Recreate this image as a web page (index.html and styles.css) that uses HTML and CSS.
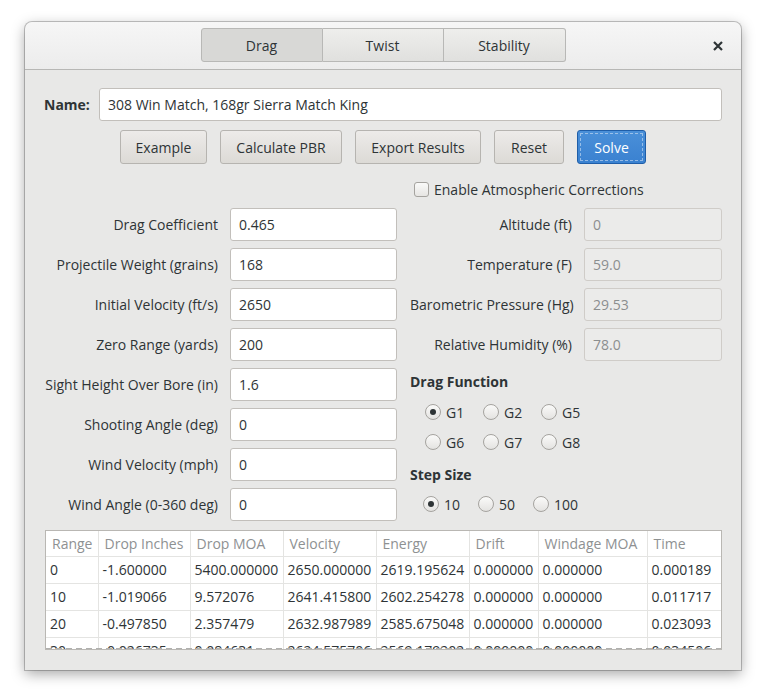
FILE: index.html
```html
<!DOCTYPE html>
<html>
<head>
<meta charset="utf-8">
<link rel="stylesheet" href="styles.css">
</head>
<body>
<div class="window">
  <header class="headerbar">
    <div class="switcher">
      <div class="sw-btn active">Drag</div>
      <div class="sw-btn">Twist</div>
      <div class="sw-btn">Stability</div>
    </div>
    <div class="close">
      <svg width="10" height="10" viewBox="0 0 10 10"><path d="M1 1L9 9M9 1L1 9" stroke="#2e3436" stroke-width="2.2" fill="none"/></svg>
    </div>
  </header>
  <main class="content">
    <div class="name-row">
      <span class="name-label">Name:</span>
      <div class="entry name-entry">308 Win Match, 168gr Sierra Match King</div>
    </div>
    <div class="button-row">
      <div class="btn b-example">Example</div>
      <div class="btn b-pbr">Calculate PBR</div>
      <div class="btn b-export">Export Results</div>
      <div class="btn b-reset">Reset</div>
      <div class="btn b-solve suggested">Solve</div>
    </div>
    <div class="columns">
      <div class="left-col">
        <div class="form-grid left-grid">
          <label>Drag Coefficient</label><div class="entry">0.465</div>
          <label>Projectile Weight (grains)</label><div class="entry">168</div>
          <label>Initial Velocity (ft/s)</label><div class="entry">2650</div>
          <label>Zero Range (yards)</label><div class="entry">200</div>
          <label>Sight Height Over Bore (in)</label><div class="entry">1.6</div>
          <label>Shooting Angle (deg)</label><div class="entry">0</div>
          <label>Wind Velocity (mph)</label><div class="entry">0</div>
          <label>Wind Angle (0-360 deg)</label><div class="entry">0</div>
        </div>
      </div>
      <div class="right-col">
        <div class="check-row"><span class="checkbox"></span><span>Enable Atmospheric Corrections</span></div>
        <div class="form-grid right-grid">
          <label>Altitude (ft)</label><div class="entry disabled">0</div>
          <label>Temperature (F)</label><div class="entry disabled">59.0</div>
          <label>Barometric Pressure (Hg)</label><div class="entry disabled">29.53</div>
          <label>Relative Humidity (%)</label><div class="entry disabled">78.0</div>
        </div>
        <div class="section-title drag-title">Drag Function</div>
        <div class="radio-grid">
          <div class="radio-item"><span class="radio checked"></span>G1</div>
          <div class="radio-item"><span class="radio"></span>G2</div>
          <div class="radio-item"><span class="radio"></span>G5</div>
          <div class="radio-item"><span class="radio"></span>G6</div>
          <div class="radio-item"><span class="radio"></span>G7</div>
          <div class="radio-item"><span class="radio"></span>G8</div>
        </div>
        <div class="section-title step-title">Step Size</div>
        <div class="radio-row">
          <div class="radio-item"><span class="radio checked"></span>10</div>
          <div class="radio-item"><span class="radio"></span>50</div>
          <div class="radio-item"><span class="radio"></span>100</div>
        </div>
      </div>
    </div>
    <div class="table-wrap">
      <table class="results">
        <colgroup>
          <col class="c1"><col class="c2"><col class="c3"><col class="c4"><col class="c5"><col class="c6"><col class="c7"><col class="c8">
        </colgroup>
        <thead>
          <tr><th>Range</th><th>Drop Inches</th><th>Drop MOA</th><th>Velocity</th><th>Energy</th><th>Drift</th><th>Windage MOA</th><th>Time</th></tr>
        </thead>
        <tbody>
          <tr><td>0</td><td>-1.600000</td><td>5400.000000</td><td>2650.000000</td><td>2619.195624</td><td>0.000000</td><td>0.000000</td><td>0.000189</td></tr>
          <tr><td>10</td><td>-1.019066</td><td>9.572076</td><td>2641.415800</td><td>2602.254278</td><td>0.000000</td><td>0.000000</td><td>0.011717</td></tr>
          <tr><td>20</td><td>-0.497850</td><td>2.357479</td><td>2632.987989</td><td>2585.675048</td><td>0.000000</td><td>0.000000</td><td>0.023093</td></tr>
          <tr><td>30</td><td>-0.026735</td><td>0.084631</td><td>2624.575706</td><td>2569.179202</td><td>0.000000</td><td>0.000000</td><td>0.034506</td></tr>
        </tbody>
      </table>
      <div class="undershoot"></div>
    </div>
  </main>
</div>
</body>
</html>
```
FILE: styles.css
```css
* { box-sizing: border-box; }
html, body { margin: 0; padding: 0; }
body {
  background: #ffffff;
  font-family: "Open Sans", "Noto Sans", sans-serif;
  font-size: 14px;
  color: #2e3436;
  width: 766px;
  height: 699px;
  overflow: hidden;
}
.window {
  margin: 22px 0 0 25px;
  width: 716px;
  height: 648px;
  border-radius: 7px 7px 0 0;
  background: #e8e8e7;
  box-shadow: 0 0 0 1px rgba(0,0,0,0.22), 0 4px 14px rgba(0,0,0,0.35);
  display: flex;
  flex-direction: column;
  overflow: hidden;
}
.headerbar {
  height: 48px;
  flex: none;
  background: linear-gradient(#f6f6f6, #ececec);
  border-bottom: 1px solid #b7b7b5;
  border-radius: 7px 7px 0 0;
  display: flex;
  align-items: center;
  justify-content: center;
  position: relative;
}
.switcher {
  display: flex;
  margin-top: -1px;
}
.sw-btn {
  width: 121px;
  height: 34px;
  display: flex;
  align-items: center;
  justify-content: center;
  border: 1px solid #b8b8b6;
  border-left-width: 0;
  background: linear-gradient(#eeeeec, #e0e0de);
}
.sw-btn:first-child { border-left-width: 1px; border-radius: 3px 0 0 3px; width: 122px; }
.sw-btn:last-child { border-radius: 0 3px 3px 0; width: 122px; }
.sw-btn.active { background: #d8d8d6; }
.close {
  position: absolute;
  right: 18px;
  top: 19px;
  width: 10px;
  height: 10px;
  display: flex;
}
.content {
  padding: 18px 19px 0 19px;
  flex: 1;
}
.name-row {
  display: flex;
  align-items: center;
  gap: 12px;
}
.name-label { font-weight: bold; width: 43px; }
.entry {
  height: 33px;
  background: #ffffff;
  border: 1px solid #c2bfbb;
  border-radius: 3px;
  padding-left: 8px;
  display: flex;
  align-items: center;
  color: #2e3436;
}
.name-entry { flex: 1; }
.entry.disabled { background: #ebebea; color: #8b8e8f; border-color: #cfccc8; }
.button-row {
  display: flex;
  justify-content: center;
  gap: 13px;
  margin-top: 9px;
}
.btn {
  height: 34px;
  display: flex;
  align-items: center;
  justify-content: center;
  border: 1px solid #b6b4b0;
  border-radius: 3px;
  background: linear-gradient(#edebe9, #dcdad6);
}
.b-example { width: 87px; }
.b-pbr { width: 122px; }
.b-export { width: 126px; }
.b-reset { width: 70px; }
.b-solve { width: 69px; }
.btn.suggested {
  background: linear-gradient(#4a90d9, #3a81d0);
  border-color: #1f5ea8;
  color: #ffffff;
  outline: 1px dashed rgba(255,255,255,0.45);
  outline-offset: -4px;
}
.columns {
  display: flex;
  gap: 13px;
  margin-top: 15px;
}
.left-col { padding-top: 29px; }
.form-grid {
  display: grid;
  row-gap: 7px;
  column-gap: 12px;
  align-items: center;
}
.form-grid label { text-align: right; white-space: nowrap; }
.left-grid { grid-template-columns: 174px 167px; }
.right-grid { grid-template-columns: 162px 138px; }
.right-col { width: 312px; }
.check-row {
  height: 20px;
  display: flex;
  align-items: center;
  gap: 5px;
  padding-left: 4px;
  margin-bottom: 9px;
}
.checkbox {
  width: 15px;
  height: 15px;
  border: 1px solid #a5a39f;
  border-radius: 3px;
  background: linear-gradient(#fafaf9, #e6e5e3);
}
.section-title { font-weight: bold; height: 18px; line-height: 18px; }
.drag-title { margin-top: 12px; }
.step-title { margin-top: 9px; }
.radio-grid {
  display: grid;
  grid-template-columns: 58px 58px 58px;
  grid-auto-rows: 30px;
  align-items: center;
  padding-left: 15px;
  margin-top: 6px;
}
.radio-row {
  display: flex;
  gap: 18px;
  height: 30px;
  align-items: center;
  padding-left: 13px;
  margin-top: 5px;
}
.radio-item { display: flex; align-items: center; gap: 5px; }
.radio {
  width: 16px;
  height: 16px;
  border-radius: 50%;
  border: 1px solid #a5a39f;
  background: linear-gradient(#fafaf9, #e4e3e1);
  position: relative;
}
.radio.checked::after {
  content: "";
  position: absolute;
  left: 4px;
  top: 4px;
  width: 6px;
  height: 6px;
  border-radius: 50%;
  background: #2e3436;
}
.table-wrap {
  margin-top: 9px;
  margin-left: 1px;
  width: 677px;
  height: 120px;
  border: 1px solid #b9b7b3;
  background: #ffffff;
  overflow: hidden;
  position: relative;
}
.results {
  border-collapse: collapse;
  table-layout: fixed;
  width: 676px;
}
.c1 { width: 52px; } .c2 { width: 92px; } .c3 { width: 93px; } .c4 { width: 93px; }
.c5 { width: 93px; } .c6 { width: 69px; } .c7 { width: 109px; } .c8 { width: 75px; }
.results th {
  height: 25px;
  font-weight: normal;
  color: #8e9192;
  text-align: left;
  padding: 0 6px;
  border-right: 1px solid #e4e4e2;
  border-bottom: 1px solid #e4e4e2;
  white-space: nowrap;
  overflow: hidden;
}
.results td {
  height: 27px;
  padding: 0 4px;
  border-right: 1px solid #e4e4e2;
  border-bottom: 1px solid #e4e4e2;
  white-space: nowrap;
  overflow: hidden;
}
.results th:last-child, .results td:last-child { border-right: none; }
.undershoot {
  position: absolute;
  left: 0;
  right: 0;
  bottom: 0;
  height: 1px;
  background: repeating-linear-gradient(90deg, #b0b0ae 0 6px, transparent 6px 10px);
}
```
